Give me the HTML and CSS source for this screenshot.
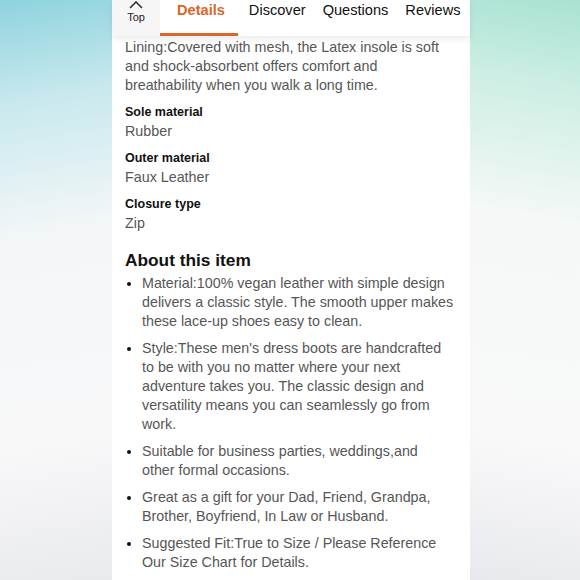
FILE: index.html
```html
<!DOCTYPE html>
<html lang="en">
<head>
  <meta charset="UTF-8">
  <meta name="viewport" content="width=device-width, initial-scale=1.0">
  <title>Product Details</title>
  <link rel="stylesheet" href="styles.css">
</head>
<body>
  <div class="page">
    <div class="side side-left"></div>

    <div class="panel">
      <div class="tabbar">
        <div class="top-btn">
          <svg width="14" height="8" viewBox="0 0 14 8">
            <path d="M1 7 L7 1 L13 7" fill="none" stroke="#333" stroke-width="1.6"/>
          </svg>
          <span>Top</span>
        </div>
        <div class="tab active">Details</div>
        <div class="tab">Discover</div>
        <div class="tab">Questions</div>
        <div class="tab">Reviews</div>
      </div>

      <div class="content">
        <p class="text">Lining:Covered with mesh, the Latex insole is soft and shock-absorbent offers comfort and breathability when you walk a long time.</p>

        <div class="attr">
          <div class="attr-name">Sole material</div>
          <div class="text">Rubber</div>
        </div>
        <div class="attr">
          <div class="attr-name">Outer material</div>
          <div class="text">Faux Leather</div>
        </div>
        <div class="attr">
          <div class="attr-name">Closure type</div>
          <div class="text">Zip</div>
        </div>

        <h2>About this item</h2>
        <ul class="bullets">
          <li>Material:100% vegan leather with simple design delivers a classic style. The smooth upper makes these lace-up shoes easy to clean.</li>
          <li>Style:These men's dress boots are handcrafted to be with you no matter where your next adventure takes you. The classic design and versatility means you can seamlessly go from work.</li>
          <li>Suitable for business parties, weddings,and<br>other formal occasions.</li>
          <li>Great as a gift for your Dad, Friend, Grandpa, Brother, Boyfriend, In Law or Husband.</li>
          <li>Suggested Fit:True to Size / Please Reference Our Size Chart for Details.</li>
        </ul>
      </div>
    </div>

    <div class="side side-right"></div>
  </div>
</body>
</html>
```

FILE: styles.css
```css
body {
  margin: 0;
  font-family: "Liberation Sans", Arial, sans-serif;
  color: #111;
}

.page {
  display: flex;
  width: 580px;
  height: 580px;
  overflow: hidden;
}

.side {
  flex: 1;
}

.side-left {
  flex: 0 0 112px;
  background: linear-gradient(170deg, #8ed3de 0%, #c9e9ee 18%, #f3f6f7 40%, #f8f8f9 75%, #e9eaee 100%);
}

.side-right {
  background: linear-gradient(190deg, #a8e2d3 0%, #cdeee4 15%, #f5f8f7 38%, #f9f9fa 75%, #e8e9ed 100%);
}

.panel {
  width: 358px;
  background-color: #fff;
  display: flex;
  flex-direction: column;
}

/* Tab bar */
.tabbar {
  display: flex;
  height: 36px;
  background-color: #fff;
  box-shadow: 0 3px 6px rgba(0, 0, 0, 0.08);
  position: relative;
  white-space: nowrap;
}

.top-btn {
  flex: 0 0 48px;
  background-color: #f6f6f6;
  display: flex;
  flex-direction: column;
  align-items: center;
  padding-top: 1px;
  font-size: 11px;
  color: #222;
}

.top-btn span {
  margin-top: 2px;
}

.tab {
  flex-shrink: 0;
  font-size: 14.6px;
  padding: 2px 9px 0 8px;
  color: #111;
}

.tab.active {
  color: #d9662a;
  font-weight: bold;
  padding: 2px 13px 0 17px;
  border-bottom: 3px solid #d9662a;
  margin-right: 3px;
}

/* Content */
.content {
  padding: 2px 15.5px 0 13px;
}

.text {
  font-size: 14.3px;
  line-height: 19px;
  color: #565656;
  margin: 0;
}

.attr {
  margin-top: 8px;
}

.attr-name {
  font-size: 12.5px;
  font-weight: bold;
  line-height: 19px;
}

h2 {
  font-size: 17.3px;
  margin: 16px 0 3px;
  line-height: 22px;
}

.bullets {
  margin: 0;
  padding-left: 17px;
  font-size: 14.3px;
  line-height: 19px;
  color: #565656;
}

.bullets li {
  margin-bottom: 8px;
}

.bullets li::marker {
  color: #111;
}
```
